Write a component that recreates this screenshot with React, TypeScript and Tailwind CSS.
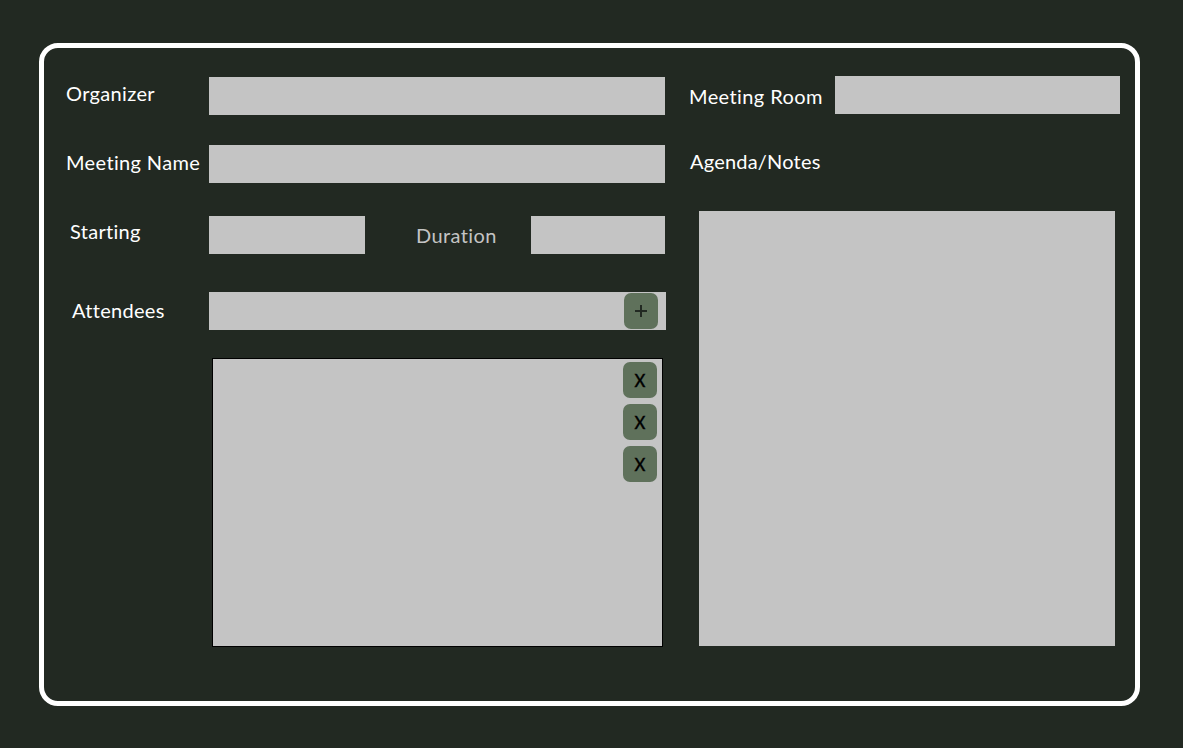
import type { ReactNode } from 'react';

function Label({ className, children }: { className: string; children: ReactNode }) {
  return <span className={`block shrink-0 whitespace-nowrap text-[20px] leading-[22px] ${className}`}>{children}</span>;
}

function Field({ className, label }: { className: string; label: string }) {
  return <input aria-label={label} className={`block h-[38px] shrink-0 bg-[#c4c4c4] px-2 text-black outline-none ${className}`} />;
}

function RemoveButton() {
  return (
    <button className="flex h-9 w-[34px] items-center justify-center rounded-[7px] bg-[#5f715b] text-[18px] font-medium leading-9 text-black">
      <span className="inline-block scale-x-[0.92] [-webkit-text-stroke:0.4px_black]">X</span>
    </button>
  );
}

export default function App() {
  return (
    <div className="h-[748px] w-[1183px] overflow-hidden bg-[#222922] pl-[39px] pt-[43px] font-['Lato',sans-serif] text-white">
      <main className="flex h-[663px] w-[1101px] rounded-[19px] border-[5px] border-white">
        <section className="w-[645px] shrink-0 pt-[29px]">
          <div className="flex h-[38px]">
            <Label className="w-[165px] pl-[22px] pt-[5px] tracking-[0.35px]">Organizer</Label>
            <Field label="Organizer" className="w-[456px]" />
          </div>
          <div className="mt-[30px] flex h-[38px]">
            <Label className="w-[165px] pl-[22px] pt-[6px] tracking-[0.36px]">Meeting Name</Label>
            <Field label="Meeting Name" className="w-[456px]" />
          </div>
          <div className="mt-[33px] flex h-[38px]">
            <Label className="w-[165px] pl-[26px] pt-[4px] tracking-[0.3px]">Starting</Label>
            <Field label="Starting" className="w-[156px]" />
            <Label className="w-[166px] pl-[51px] pt-[8px] tracking-[0.4px] text-[#c4c4c4]">Duration</Label>
            <Field label="Duration" className="w-[134px]" />
          </div>
          <div className="mt-[38px] flex h-[38px]">
            <Label className="w-[165px] pl-[28px] pt-[7px] tracking-[0.3px]">Attendees</Label>
            <div className="flex w-[457px] bg-[#c4c4c4] pr-2 pt-px">
              <input aria-label="Attendees" className="min-w-0 flex-1 px-2 text-black outline-none" />
              <button aria-label="Add attendee" className="flex h-9 w-[34px] items-center justify-center rounded-[7px] bg-[#5f715b] text-[#222922]">
                <svg width="12" height="12" viewBox="0 0 12 12" fill="currentColor" aria-hidden="true">
                  <path d="M5 0h2v5h5v2H7v5H5V7H0V5h5z" />
                </svg>
              </button>
            </div>
          </div>
          <div className="ml-[168px] mt-[28px] flex h-[289px] w-[451px] flex-col items-end gap-1.5 border border-black bg-[#c4c4c4] pr-[5px] pt-[3px]">
            <RemoveButton />
            <RemoveButton />
            <RemoveButton />
          </div>
        </section>
        <section className="pt-[28px]">
          <div className="flex h-[38px]">
            <Label className="w-[146px] pt-[9px] tracking-[0.4px]">Meeting Room</Label>
            <Field label="Meeting Room" className="w-[285px]" />
          </div>
          <Label className="mt-[36px] pl-px tracking-[0.2px]">Agenda/Notes</Label>
          <textarea aria-label="Agenda/Notes" className="ml-[10px] mt-[39px] block h-[435px] w-[416px] resize-none bg-[#c4c4c4] p-2 text-black outline-none" />
        </section>
      </main>
    </div>
  );
}
